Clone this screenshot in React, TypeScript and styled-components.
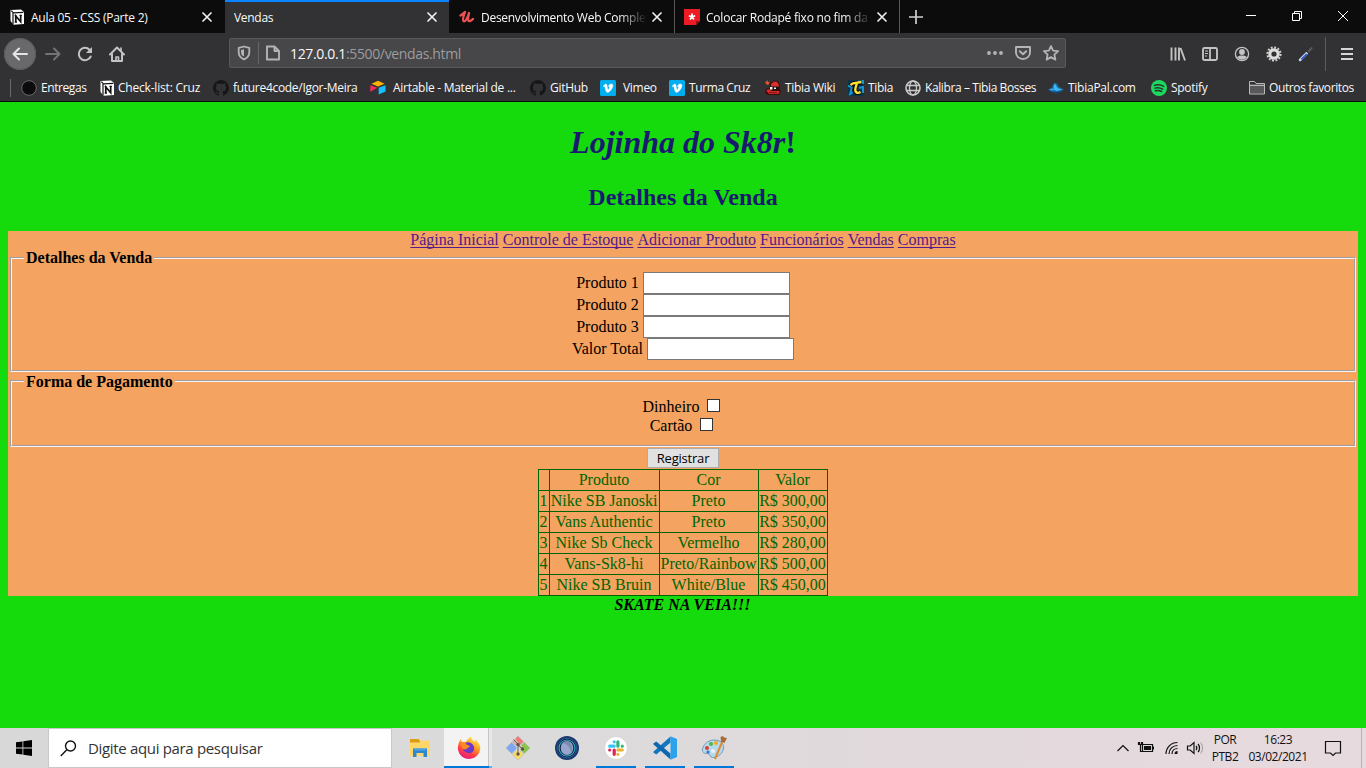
import React from "react";
import styled, { createGlobalStyle, css } from "styled-components";

const ui = `"Open Sans", "Noto Sans", sans-serif`;
const serif = `"Liberation Serif", "Times New Roman", serif`;

const GlobalStyle = createGlobalStyle`
  * { box-sizing: border-box; }
  body { margin: 0; overflow: hidden; background: #15db0c; }
  svg { display: block; flex: none; }
`;

const Screen = styled.div`
  display: flex;
  flex-direction: column;
  width: 1366px;
  height: 768px;
  overflow: hidden;
  background: #15db0c;
`;

/* ---------- browser window ---------- */

const TabStrip = styled.div`
  display: flex;
  height: 33px;
  background: #0c0c0d;
  color: #f9f9fa;
  font: 12px/33px ${ui};
`;

const TabBox = styled.div<{ $active?: boolean; $line?: boolean }>`
  display: flex;
  align-items: center;
  gap: 6px;
  width: 225px;
  height: 33px;
  padding: 1px 11px 0 9px;
  border-right: 1px solid ${(p) => (p.$line ? "#58585a" : "transparent")};
  ${(p) =>
    p.$active &&
    css`
      background: #323234;
      background-clip: padding-box;
      box-shadow: inset 0 2px 0 #0a84ff;
    `}
`;

const TabTitle = styled.span<{ $ls: number; $fade?: boolean }>`
  flex: 1;
  min-width: 0;
  height: 33px;
  margin-right: -2px;
  overflow: hidden;
  white-space: nowrap;
  letter-spacing: ${(p) => p.$ls}px;
  ${(p) => p.$fade && css`mask-image: linear-gradient(to left, transparent 0, #000 28px);`}
`;

const NewTab = styled.div`
  display: flex;
  align-items: center;
  width: 343px;
  padding-left: 8px;
`;

const WindowButtons = styled.div`
  display: flex;
  align-items: center;
  gap: 30px;
  height: 32px;
`;

const NavBar = styled.div`
  display: flex;
  align-items: center;
  height: 41px;
  background: #323234;
`;

const NavButtons = styled.div`
  display: flex;
  align-items: center;
  gap: 16px;
  width: 229px;
  padding-left: 4px;
`;

const BackButton = styled.div`
  display: grid;
  place-items: center;
  width: 32px;
  height: 32px;
  margin-right: -8px;
  border-radius: 50%;
  background: #69696b;
  box-shadow: 0 0 0 1px #5a5a5c inset;
`;

const UrlBar = styled.div`
  display: flex;
  align-items: center;
  width: 837px;
  height: 30px;
  margin-top: -1px;
  padding: 0 6px;
  border: 1px solid #59595b;
  border-radius: 2px;
  background: #474749;
`;

const Divider = styled.i<{ $h: number; $color?: string; $m?: string }>`
  flex: none;
  width: 1px;
  height: ${(p) => p.$h}px;
  margin: ${(p) => p.$m ?? "0"};
  background: ${(p) => p.$color ?? "#5c5c5e"};
`;

const Address = styled.span`
  flex: 1;
  padding: 2px 0 0 9px;
  color: #9c9c9e;
  font: 14px/26px ${ui};
  letter-spacing: -0.35px;
  b { color: #f9f9fa; font-weight: 400; }
`;

const UrlActions = styled.div`
  display: flex;
  gap: 12px;
`;

const Tools = styled.div`
  display: flex;
  align-items: center;
  gap: 16px;
  padding-left: 104px;
`;

const Bookmarks = styled.div`
  display: flex;
  align-items: center;
  height: 28px;
  border-bottom: 1px solid #0c0c0d;
  background: #323234;
  color: #f9f9fa;
  font: 12px/27px ${ui};
`;

const Bookmark = styled.div<{ $w: number; $gap?: number; $ls?: number }>`
  display: flex;
  align-items: center;
  flex: none;
  gap: ${(p) => p.$gap ?? 4}px;
  width: ${(p) => p.$w}px;
  white-space: nowrap;
  letter-spacing: ${(p) => p.$ls ?? -0.42}px;
`;

/* ---------- web page ---------- */

const Page = styled.div`
  height: 626px;
  padding: 0 8px;
  background: #15db0c;
  color: #000;
  font: 16px/18px ${serif};
  text-align: center;
`;

const Header = styled.header`
  height: 129px;
  padding-top: 22px;
  color: #191970;
`;

const Title = styled.h1`
  margin: 0 0 22px;
  font-size: 32px;
  line-height: 37px;
`;

const Subtitle = styled.h2`
  margin: 0;
  font-size: 24px;
  line-height: 28px;
`;

const Main = styled.main`
  display: flex;
  flex-direction: column;
  align-items: center;
  height: 365px;
  background: #f4a460;
`;

const Links = styled.nav`
  display: flex;
  gap: 4px;
  height: 18px;
  a {
    color: #551a8b;
    text-decoration: underline 1px;
    text-underline-offset: 2px;
    text-decoration-skip-ink: none;
  }
`;

const Group = styled.fieldset<{ $h: number; $pad: number }>`
  width: 1346px;
  height: ${(p) => p.$h}px;
  min-width: 0;
  margin: 0;
  padding: ${(p) => p.$pad}px 12px 0;
  border: 2px groove #f4f4f4;
  & + & { margin-bottom: 1px; }
`;

const Legend = styled.legend<{ $drop?: number }>`
  height: 18px;
  padding: ${(p) => p.$drop ?? 0}px 2px 0;
  font-weight: 700;
  line-height: 18px;
  text-align: left;
`;

const Field = styled.label<{ $h: number; $gap: number; $top?: boolean }>`
  display: flex;
  align-items: ${(p) => (p.$top ? "flex-start" : "center")};
  justify-content: center;
  gap: ${(p) => p.$gap}px;
  height: ${(p) => p.$h}px;
`;

const TextInput = styled.input`
  width: 147px;
  height: 22px;
  margin: 0;
  border: 1px solid #7a7a7a;
  background: #fff;
  outline: none;
`;

const Check = styled.input`
  appearance: none;
  width: 13px;
  height: 13px;
  margin: 1px 3px 0 0;
  border: 1px solid #333;
  background: #fff;
`;

const Submit = styled.button`
  width: 72px;
  height: 20px;
  margin-bottom: 1px;
  padding: 0;
  border: 1px solid #adadad;
  background: #e1e1e1;
  color: #000;
  font: 13px/18px ${ui};
  letter-spacing: -0.2px;
`;

const Products = styled.table`
  width: 290px;
  table-layout: fixed;
  border-collapse: collapse;
  color: #006400;
  th, td {
    height: 21px;
    padding: 0;
    border: 1px solid #006400;
    font-weight: 400;
    line-height: 18px;
    text-indent: -1px;
    white-space: nowrap;
  }
`;

const Footer = styled.footer`
  padding-right: 1px;
  font-style: italic;
  font-weight: 700;
`;

/* ---------- taskbar ---------- */

const Taskbar = styled.div`
  display: flex;
  height: 40px;
  background: linear-gradient(90deg, #d8d8d9, #dcdbdc 40%, #e1d9dc 65%, #e7dadf);
`;

const Start = styled.div`
  display: flex;
  align-items: center;
  width: 48px;
  padding-left: 16px;
`;

const Search = styled.div`
  display: flex;
  align-items: center;
  gap: 11px;
  width: 344px;
  padding-left: 11px;
  border: 1px solid #c8c8c8;
  background: #fff;
  color: #333;
  font: 15px/38px ${ui};
  letter-spacing: -0.33px;
`;

const Apps = styled.div`
  display: flex;
  width: 721px;
  padding-left: 3px;
`;

const TaskButton = styled.div<{ $state?: "active" | "open" }>`
  display: grid;
  place-items: center;
  width: 49px;
  height: 40px;
  ${(p) =>
    p.$state === "open" &&
    css`
      background: linear-gradient(#0078d7, #0078d7) 50% 100% / 40px 2px no-repeat;
    `}
  ${(p) =>
    p.$state === "active" &&
    css`
      background:
        linear-gradient(#0078d7, #0078d7) 0 100% / 45px 2px no-repeat,
        linear-gradient(#6fa9d9, #6fa9d9) 45px 100% / 3px 2px no-repeat,
        linear-gradient(90deg, #f3f3f3 44px, #c4c4c5 44px 45px, #e9e8e9 45px 48px, transparent 48px);
    `}
`;

const Tray = styled.div`
  display: flex;
  align-items: center;
  flex: 1;
  color: #111;
  font: 12px/17px ${ui};
  letter-spacing: -0.45px;
`;

const Stack = styled.div<{ $w: number }>`
  display: flex;
  flex-direction: column;
  align-items: center;
  width: ${(p) => p.$w}px;
  height: 35px;
  white-space: nowrap;
`;

/* ---------- icons ---------- */

const Svg = ({ w = 16, h, vb, children, ...rest }: any) => (
  <svg width={w} height={h ?? w} viewBox={vb ?? `0 0 ${w} ${h ?? w}`} fill="none" {...rest}>
    {children}
  </svg>
);

const TrayIcon = styled(Svg)<{ $ml: number }>`
  margin-left: ${(p) => p.$ml}px;
`;

const stroke = { stroke: "#c3c3c4", strokeWidth: 2, strokeLinecap: "round", strokeLinejoin: "round" } as const;

const Close = () => (
  <Svg w={12}>
    <path d="M2 2l8 8M10 2l-8 8" stroke="#f0f0f1" strokeWidth="1.7" strokeLinecap="round" />
  </Svg>
);

const Notion = () => (
  <Svg>
    <path d="M1.500 1L12 .5 15 3v12l-10.500.8L1.500 12z" fill="#fff" />
    <path d="M2.300 1.700L4.400 3.900l10-.5M4 4v11.500" stroke="#111" strokeWidth="1.200" />
    <path d="M6.800 13V7l4.900 5.800V6.500" stroke="#111" strokeWidth="1.700" />
    <path d="M5.700 6.600h1.800M10.500 6.400h2.400M5.700 13.100H8" stroke="#111" strokeWidth="1.100" />
  </Svg>
);

const Udemy = () => (
  <Svg>
    <path d="M1.500 6.500C4 5 5 3.500 6 3 4.500 7 3 11.500 4.700 12.300 6.500 13 9 8 10 4c-1 4-1.500 8 .2 8.200C12 12.300 13 10.500 14 10" stroke="#ec5252" strokeWidth="2.300" strokeLinecap="round" strokeLinejoin="round" />
  </Svg>
);

const StarTile = () => (
  <Svg>
    <path d="M0 0h16v12l-4 4H0z" fill="#ed1c24" />
    <path d="M12 16v-4h4z" fill="#8f1015" />
    <path d="M8 7.800V4.500M8 7.800l3.200-1M8 7.800l2 2.700M8 7.800l-2 2.700M8 7.800l-3.200-1" stroke="#fff" strokeWidth="1.700" />
  </Svg>
);

const GitHub = () => (
  <Svg>
    <path fill="#161617" fillRule="evenodd" d="M8 0a8 8 0 0 0-2.530 15.590c.4.070.550-.170.550-.380v-1.490c-2.010.440-2.530-.5-2.690-.950-.090-.230-.480-.950-.820-1.140-.280-.150-.680-.520-.010-.530.630-.010 1.080.580 1.230.820.720 1.210 1.870.870 2.330.660.070-.520.280-.870.510-1.070-1.780-.2-3.640-.890-3.640-3.950 0-.870.310-1.590.820-2.150-.080-.2-.360-1.020.080-2.120 0 0 .670-.210 2.200.820a7.400 7.400 0 0 1 4 0c1.530-1.040 2.200-.820 2.200-.820.440 1.100.160 1.920.080 2.120.510.560.820 1.270.820 2.150 0 3.070-1.870 3.750-3.650 3.950.290.250.540.730.540 1.480v2.190c0 .210.150.460.550.380A8 8 0 0 0 8 0z" />
  </Svg>
);

const Vimeo = () => (
  <Svg>
    <rect width="16" height="16" rx="1.500" fill="#00adef" />
    <path d="M3 6.200L5.400 4C6.800 3.700 7 5 7.300 7c.3 1.900.6 2.600 1 2.500.5-.2 1.200-1.700 1.200-2.300 0-.7-.5-.9-1.100-.6C9 4.400 10.200 3.800 11.500 3.900c1.300.1 1.700 1.100 1.300 2.700-.6 2.300-3.300 5.900-5.200 5.900-1.700 0-1.900-2.300-2.700-5.500-.2-.9-.5-.8-1.300-.3z" fill="#fff" stroke="#fff" strokeWidth=".4" />
  </Svg>
);

const Airtable = () => (
  <Svg>
    <path d="M1.500 3.800L8 .8l6.500 3L8 6.600z" fill="#fcb400" />
    <path d="M8.700 7.800l6.800-2.600v6.400l-6.800 2.900z" fill="#18bfff" />
    <path d="M.3 5.200l7 2.600-7 4z" fill="#f82b60" />
  </Svg>
);

const TibiaWiki = () => (
  <Svg>
    <path d="M5 3l4-2.500 4 .5 2 4-.5 3 1.500 3.500-2 3.500H3L0 12.500 1 9l4-1z" fill="#3d0a0a" />
    <path d="M6 4l3-2.500 3 .3L14 5l-.5 2L6 7.500z" fill="#d83131" />
    <path d="M1 10.500l3-1.500 3 2h6l2 .5-1.500 2.500H4z" fill="#d42828" />
    <path d="M4 12.500l8 .3" stroke="#7d1313" />
    <path d="M4.500 6.500h9v3.500h-8z" fill="#1b1111" />
    <path d="M5 7h2.500v2.500H5zM9 7.500h2V9H9z" fill="#f4f1e8" />
    <path d="M0 1l1.500 1 1-2 .8 2 1.500.5L3 5 1 4z" fill="#f0551a" />
  </Svg>
);

const Tibia = () => (
  <Svg>
    <rect width="16" height="16" fill="#0b3350" />
    <path d="M0 6l4 1-2 7M1 15l4-3M10 0l5 1v3M11 8l4-1v6" stroke="#1794cf" strokeWidth="2" />
    <path d="M2.500 5.500L5 3.500l9-1M9 3L7 8c-1 4 1 6 5 4" stroke="#0f0d07" strokeWidth="4.600" />
    <path d="M2.500 5L5 3.300l8.500-1.300M9 3L7.500 8c-1 4 1.500 6 5 4" stroke="#ffe033" strokeWidth="2.300" />
  </Svg>
);

const Globe = () => (
  <Svg>
    <circle cx="8" cy="8" r="7" stroke="#c9c9ca" strokeWidth="1.600" />
    <ellipse cx="8" cy="8" rx="3.500" ry="7" stroke="#c9c9ca" strokeWidth="1.300" />
    <path d="M1.500 5.500h13M1.500 10.500h13" stroke="#c9c9ca" strokeWidth="1.300" />
  </Svg>
);

const TibiaPal = () => (
  <Svg>
    <path d="M0 9.500l4-2L6 3l3 .5L11 7l5 2.500-4 2.500-4 1.500-5-2z" fill="#176da8" />
    <path d="M5.500 6l1.500-2.500L9.500 8l4.500 1.500-5 1.500-3-1zM1 9.500l4-1 1 2z" fill="#42b5ee" />
    <path d="M4 11.500l5 .5 3-1-3 3z" fill="#0c426e" />
  </Svg>
);

const Spotify = () => (
  <Svg>
    <circle cx="8" cy="8" r="8" fill="#1ed760" />
    <path d="M3.500 5.400c3-.9 6.500-.6 9.200.9M3.900 8.100c2.600-.7 5.500-.4 7.800 1M4.300 10.700c2.200-.5 4.400-.3 6.300.8" stroke="#24352a" strokeWidth="1.500" strokeLinecap="round" />
  </Svg>
);

const Folder = () => (
  <Svg>
    <path d="M1 4h14v9.500H1z" fill="#58585a" />
    <path d="M.5 14V1.500h5l1.500 2h8.500V14zM.5 5.500h15" stroke="#b9b9ba" />
  </Svg>
);

const Explorer = () => (
  <Svg w={22} h={20}>
    <path d="M1 1h8.500l1.500 2h10v5H1z" fill="#dc9d13" />
    <path d="M11 2.500h10V6H11zM1 4.500h20V18H1z" fill="#ffd667" />
    <path d="M4 10.500h14V19h-3.500v-4h-7v4H4z" fill="#2c87d3" />
    <path d="M4 10.500h14l-2 2H6z" fill="#49a3e8" />
  </Svg>
);

const Firefox = () => (
  <Svg w={24}>
    <defs>
      <linearGradient id="fx" x1="18" y1="1" x2="7" y2="23" gradientUnits="userSpaceOnUse">
        <stop stopColor="#fff04a" />
        <stop offset=".4" stopColor="#ff9a25" />
        <stop offset=".7" stopColor="#ff3d45" />
        <stop offset="1" stopColor="#e21688" />
      </linearGradient>
    </defs>
    <path d="M4 3c0 2 .5 3 2 3 1 0 2-.5 3-.3C10 3.500 12 2 14 .5c.3 3 2 4 4 5.500 0-1 0-2-.4-3C20.500 5 23.500 9 23.300 13A11.300 11.300 0 0 1 1 14C.5 10 2 5 4 3z" fill="url(#fx)" />
    <path d="M8 7c3-2 8-.5 9 4s-3 7-6 6c-3-.5-5-2.500-5-5 1 1 2 .7 4 0 1-.5 2-1 1.500-2-2 0-3-1-3.500-3z" fill="#6a39c9" />
    <path d="M5 6c2 0 4 .5 4.500 2.500L13 10c0 1-2.500 1.500-3 2.500s-2.500 1-4 .5C4 11 4 8 5 6z" fill="#ff8b20" />
  </Svg>
);

const Git = () => (
  <Svg w={26}>
    <g transform="rotate(45 13 13)" stroke="#b9b9b9" strokeWidth=".6">
      <path d="M4.500 4.500h8v8h-8z" fill="#f07878" />
      <path d="M13.500 4.500h8v8h-8z" fill="#8bc34f" />
      <path d="M4.500 13.500h8v8h-8z" fill="#7ba7f5" />
      <path d="M13.500 13.500h8v8h-8z" fill="#f7dd60" />
    </g>
    <path d="M8.500 4.500L13 9v9M13 10l4 3.500" stroke="#f4efe9" strokeWidth="2.600" />
    <path d="M8.500 4.500L13 9v9M13 10l4 3.500" stroke="#71655b" strokeWidth="1.200" />
    <circle cx="13" cy="19" r="1.700" fill="#5c544d" />
    <circle cx="17.500" cy="14" r="1.700" fill="#5c544d" />
    <circle cx="13" cy="9.500" r="1.700" fill="#5c544d" />
  </Svg>
);

const Orb = () => (
  <Svg w={24}>
    <circle cx="12" cy="12" r="12" fill="#1b3a70" />
    <circle cx="12" cy="12" r="9.700" fill="#0f2245" stroke="#2e5587" />
    <circle cx="12" cy="12" r="8" stroke="#2ca9c0" strokeWidth="1.200" />
    <ellipse cx="12" cy="12" rx="6.300" ry="7" fill="#98a6cd" />
    <path d="M8 7c5 1 8 6 8 10 3-4 1-11-4-12z" fill="#7c8aad" />
  </Svg>
);

const Slack = () => (
  <Svg w={24}>
    <circle cx="12" cy="12" r="11.500" fill="#fff" stroke="#d0cfd0" strokeWidth=".8" />
    <g strokeWidth="3.200" strokeLinecap="round">
      <path d="M10.200 5.800h0M5.700 10.200h4.500" stroke="#36c5f0" />
      <path d="M13.900 5.800v4.400M18.300 10.200h0" stroke="#2eb67d" />
      <path d="M13.900 14h4.400M13.900 18.300h0" stroke="#ecb22e" />
      <path d="M10.200 14v4.300M5.700 14h0" stroke="#e01e5a" />
    </g>
  </Svg>
);

const VsCode = () => (
  <Svg w={24}>
    <path d="M17.500 6.500L3.300 18.500.3 16.600v-.8L17.500.5z" fill="#1277c0" />
    <path d="M17.500 17.500L3.300 5.500.3 7.400v.8l17.200 15.300z" fill="#0e68b0" />
    <path d="M17.500.3L24 3v18l-6.500 2.700z" fill="#2aa3ec" />
  </Svg>
);

const Paint = () => (
  <Svg w={26}>
    <path d="M13 5c6 0 10 3 9.500 8s-5 9.500-11 9.500c-3 0-2-4-5-4S1 18 1.500 14 7 5 13 5z" fill="#b7d9ec" stroke="#6f9dbb" />
    <circle cx="10" cy="9" r="2" fill="#53b649" />
    <circle cx="15" cy="8" r="2" fill="#f5a928" />
    <circle cx="6" cy="13" r="2" fill="#dc3e35" />
    <circle cx="7" cy="17" r="1.600" fill="#3b74c4" />
    <circle cx="12" cy="16" r="2" fill="#e9f3f8" />
    <path d="M21.500 6L14 24" stroke="#e08b31" strokeWidth="2" />
    <path d="M19.500 2l2.500-1 1 1.500L26 3l-2.500 5-3.500-1.500z" fill="#a56b3d" />
  </Svg>
);

const rows = [
  ["1", "Nike SB Janoski", "Preto", "R$ 300,00"],
  ["2", "Vans Authentic", "Preto", "R$ 350,00"],
  ["3", "Nike Sb Check", "Vermelho", "R$ 280,00"],
  ["4", "Vans-Sk8-hi", "Preto/Rainbow", "R$ 500,00"],
  ["5", "Nike SB Bruin", "White/Blue", "R$ 450,00"],
];

const links = ["Página Inicial", "Controle de Estoque", "Adicionar Produto", "Funcionários", "Vendas", "Compras"];

const bookmarks: [React.FC, string, number, number, number][] = [
  [Notion, "Check-list: Cruz", 114, 3, -0.2],
  [GitHub, "future4code/Igor-Meira", 157, 4, -0.3],
  [Airtable, "Airtable - Material de ...", 160, 7, -0.27],
  [GitHub, "GitHub", 70, 4, -0.3],
  [Vimeo, "Vimeo", 69, 7, -0.3],
  [Vimeo, "Turma Cruz", 96, 4, -0.4],
  [TibiaWiki, "Tibia Wiki", 83, 4, -0.3],
  [Tibia, "Tibia", 57, 4, -0.3],
  [Globe, "Kalibra – Tibia Bosses", 143, 4, -0.4],
  [TibiaPal, "TibiaPal.com", 103, 4, -0.26],
  [Spotify, "Spotify", 98, 4, -0.3],
  [Folder, "Outros favoritos", 110, 4, -0.38],
];

const Browser = () => (
  <>
    <TabStrip>
      <TabBox>
        <Notion />
        <TabTitle $ls={-0.25}>Aula 05 - CSS (Parte 2)</TabTitle>
        <Close />
      </TabBox>
      <TabBox $active>
        <TabTitle $ls={-0.3}>Vendas</TabTitle>
        <Close />
      </TabBox>
      <TabBox $line>
        <Udemy />
        <TabTitle $ls={-0.28} $fade>Desenvolvimento Web Completo</TabTitle>
        <Close />
      </TabBox>
      <TabBox $line>
        <StarTile />
        <TabTitle $ls={-0.22} $fade>Colocar Rodapé fixo no fim da página</TabTitle>
        <Close />
      </TabBox>
      <NewTab>
        <Svg><path d="M8 1v14M1 8h14" stroke="#d0d0d1" strokeWidth="1.700" /></Svg>
      </NewTab>
      <WindowButtons>
        <Svg><path d="M3 7.500h10" stroke="#fff" /></Svg>
        <Svg><path d="M3.500 5.500h7v7h-7zM5.500 5V3.500h7v7H11" stroke="#fff" /></Svg>
        <Svg><path d="M3 3l10 10M13 3L3 13" stroke="#fff" /></Svg>
      </WindowButtons>
    </TabStrip>
    <NavBar>
      <NavButtons>
        <BackButton>
          <Svg><path d="M15 8H1.500M7 2.500L1.500 8 7 13.500" {...stroke} stroke="#e5e5e6" /></Svg>
        </BackButton>
        <TrayIcon $ml={1}><path d="M1 8h13.500M9 2.500L14.500 8 9 13.500" {...stroke} stroke="#747476" /></TrayIcon>
        <Svg>
          <path d="M13.700 10.500A6.200 6.200 0 1 1 12.500 3.700" {...stroke} />
          <path d="M15 1v6H9z" fill="#c3c3c4" />
        </Svg>
        <Svg>
          <path d="M1 8.500L8 1.500l7 7M3 8v7h10V8" {...stroke} />
          <path d="M7 15v-4h2.500v4M12 2v3" {...stroke} strokeWidth="1.700" />
        </Svg>
      </NavButtons>
      <UrlBar>
        <Svg>
          <path d="M8 1.500l5.300 1.400v4.300C13.300 10.700 11 13 8 14.400 5 13 2.700 10.700 2.700 7.200V2.900z" stroke="#b4b4b6" strokeWidth="1.800" strokeLinejoin="round" />
          <path d="M8 4.300v7.200C5.800 10.500 5 9 5 7V5z" fill="#b4b4b6" />
        </Svg>
        <Divider $h={22} $m="0 6px" $color="#66666a" />
        <Svg>
          <path d="M2 1.500h7.500L14 6v8.500H2zM9.500 1.500V6H14" stroke="#b4b4b6" strokeWidth="1.900" strokeLinejoin="round" />
        </Svg>
        <Address><b>127.0.0.1</b>:5500/vendas.html</Address>
        <UrlActions>
          <Svg><g fill="#b4b4b6"><circle cx="2" cy="8" r="1.900" /><circle cx="8" cy="8" r="1.900" /><circle cx="14" cy="8" r="1.900" /></g></Svg>
          <Svg>
            <path d="M1 2h14v5.500a7 6.500 0 0 1-14 0z" stroke="#b4b4b6" strokeWidth="1.900" strokeLinejoin="round" />
            <path d="M4.800 6.200L8 9.300l3.200-3.100" {...stroke} stroke="#b4b4b6" />
          </Svg>
          <Svg>
            <path d="M8 1l2.100 4.600 5 .6-3.700 3.400 1 5L8 12.100l-4.400 2.500 1-5L.9 6.200l5-.6z" stroke="#b4b4b6" strokeWidth="1.800" strokeLinejoin="round" />
          </Svg>
        </UrlActions>
      </UrlBar>
      <Tools>
        <Svg><path d="M1.500 1.500v13M5.500 1.500v13M9 1.500v13M10.500 2l4.500 12.500" stroke="#c3c3c4" strokeWidth="1.900" /></Svg>
        <Svg>
          <rect x="1" y="2" width="14" height="12" rx="1.500" stroke="#c3c3c4" strokeWidth="1.900" />
          <path d="M8 2v12" stroke="#c3c3c4" strokeWidth="1.800" />
          <path d="M3 5h3M3 7.500h3M3 10h2" stroke="#c3c3c4" strokeWidth="1.200" />
        </Svg>
        <Svg>
          <circle cx="8" cy="8" r="6.600" stroke="#c3c3c4" strokeWidth="1.300" />
          <circle cx="8" cy="6" r="2.900" fill="#c3c3c4" />
          <path d="M3 11c2-1.500 3-1.500 5-1.500s3 0 5 1.500c-2.500 3.500-7.500 3.500-10 0z" fill="#c3c3c4" />
        </Svg>
        <Svg>
          <circle cx="8" cy="8" r="6.600" stroke="#d4d4d4" strokeWidth="2" strokeDasharray="1.900 1.556" />
          <circle cx="8" cy="8" r="4.200" stroke="#dcdcdc" strokeWidth="3.200" />
        </Svg>
        <Svg>
          <path d="M2 14L9 7" stroke="#c5d0e6" strokeWidth="2.600" strokeLinecap="round" />
          <path d="M3.500 13.300L8.800 8" stroke="#2a55d5" strokeWidth="1.700" />
          <path d="M10 6l3.500-3.800" stroke="#55575a" strokeWidth="2.300" strokeLinecap="round" />
          <path d="M8.500 5l2.700 2.700" stroke="#1d1d1f" />
        </Svg>
        <Divider $h={34} $m="0 -3px 0 -5px" />
        <Svg><path d="M2 3h12M2 8h12M2 13h12" stroke="#d5d5d6" strokeWidth="2" /></Svg>
      </Tools>
    </NavBar>
    <Bookmarks>
      <Divider $h={18} $m="0 10px" $color="#6a6a6c" />
      <Bookmark $w={78}>
        <Svg><circle cx="8" cy="8" r="7.300" fill="#0b0b0c" stroke="#69696b" /></Svg>
        Entregas
      </Bookmark>
      {bookmarks.map(([Icon, text, w, gap, ls]) => (
        <Bookmark key={text} $w={w} $gap={gap} $ls={ls}>
          <Icon />
          {text}
        </Bookmark>
      ))}
    </Bookmarks>
  </>
);

const SalesPage = () => (
  <Page>
    <Header>
      <Title><em>Lojinha do Sk8r</em>!</Title>
      <Subtitle>Detalhes da Venda</Subtitle>
    </Header>
    <Main>
      <Links>{links.map((l) => <a key={l}>{l}</a>)}</Links>
      <Group $h={123} $pad={5}>
        <Legend>Detalhes da Venda</Legend>
        {["Produto 1", "Produto 2", "Produto 3", "Valor Total"].map((f) => (
          <Field key={f} $h={22} $gap={4}>{f}<TextInput /></Field>
        ))}
      </Group>
      <Group $h={75} $pad={8}>
        <Legend $drop={1}>Forma de Pagamento</Legend>
        {["Dinheiro", "Cartão"].map((f) => (
          <Field key={f} $h={19} $gap={8} $top>{f}<Check type="checkbox" /></Field>
        ))}
      </Group>
      <Submit>Registrar</Submit>
      <Products>
        <colgroup>
          <col style={{ width: 11 }} /><col style={{ width: 110 }} /><col style={{ width: 99 }} /><col style={{ width: 69 }} />
        </colgroup>
        <thead><tr><th /><th>Produto</th><th>Cor</th><th>Valor</th></tr></thead>
        <tbody>
          {rows.map((r) => <tr key={r[0]}>{r.map((c) => <td key={c}>{c}</td>)}</tr>)}
        </tbody>
      </Products>
    </Main>
    <Footer>SKATE NA VEIA!!!</Footer>
  </Page>
);

const line = { stroke: "#111", strokeWidth: 1.2 };

const WindowsBar = () => (
  <Taskbar>
    <Start>
      <Svg><path d="M0 2.300L6.500 1.400v6.200H0zM7.300 1.300L16 0v7.600H7.300zM0 8.400h6.500v6.200L0 13.700zM7.300 8.400H16V16l-8.700-1.300z" fill="#000" /></Svg>
    </Start>
    <Search>
      <Svg w={17}><circle cx="10.500" cy="6" r="5" {...line} strokeWidth={1.400} /><path d="M7 9.500L.8 16" {...line} strokeWidth={1.400} /></Svg>
      Digite aqui para pesquisar
    </Search>
    <Apps>
      <TaskButton><Explorer /></TaskButton>
      <TaskButton $state="active"><Firefox /></TaskButton>
      <TaskButton><Git /></TaskButton>
      <TaskButton><Orb /></TaskButton>
      <TaskButton $state="open"><Slack /></TaskButton>
      <TaskButton $state="open"><VsCode /></TaskButton>
      <TaskButton $state="open"><Paint /></TaskButton>
    </Apps>
    <Tray>
      <Svg w={20}><path d="M4.500 13L10 7.500l5.500 5.500" {...line} /></Svg>
      <TrayIcon w={18} $ml={4}>
        <path d="M5.500 5.500h10v7h-10z" {...line} /><path d="M7 7h7v4H7z" fill="#111" /><path d="M16 7.500h1v3h-1z" fill="#111" />
        <path d="M1.500 3v2.500h4V3M3.500 5.500v7h2M2.500 3v2M4.500 3v2" {...line} />
      </TrayIcon>
      <TrayIcon w={16} $ml={9}>
        <path d="M2 14C2 7.500 7 2.500 13.500 2.500M5 14c0-5 3.700-8.500 8.500-8.500M8 14c0-3.500 2.500-5.500 5.500-5.500" {...line} />
        <path d="M10.500 14a3 3 0 0 1 3-3v3z" fill="#111" />
      </TrayIcon>
      <TrayIcon w={18} $ml={6}>
        <path d="M1.500 7h2.700L8 3.500v11L4.200 11H1.500z" {...line} />
        <path d="M10 7c1 1.200 1 3 0 4.200M12 5c2 2.300 2 6 0 8.200" {...line} /><path d="M14.500 3.500c2.700 3 2.700 8 0 11" stroke="#999" />
      </TrayIcon>
      <Stack $w={42}><span>POR</span><span>PTB2</span></Stack>
      <Stack $w={64}><span>16:23</span><span>03/02/2021</span></Stack>
      <TrayIcon w={18} $ml={14}><path d="M1.500 2.500h15v11.500h-5L9 16.500 6.500 14h-5z" {...line} /></TrayIcon>
      <Divider $h={40} $m="0 0 0 19px" $color="#b9b0b4" />
    </Tray>
  </Taskbar>
);

export default function App() {
  return (
    <Screen>
      <GlobalStyle />
      <Browser />
      <SalesPage />
      <WindowsBar />
    </Screen>
  );
}
